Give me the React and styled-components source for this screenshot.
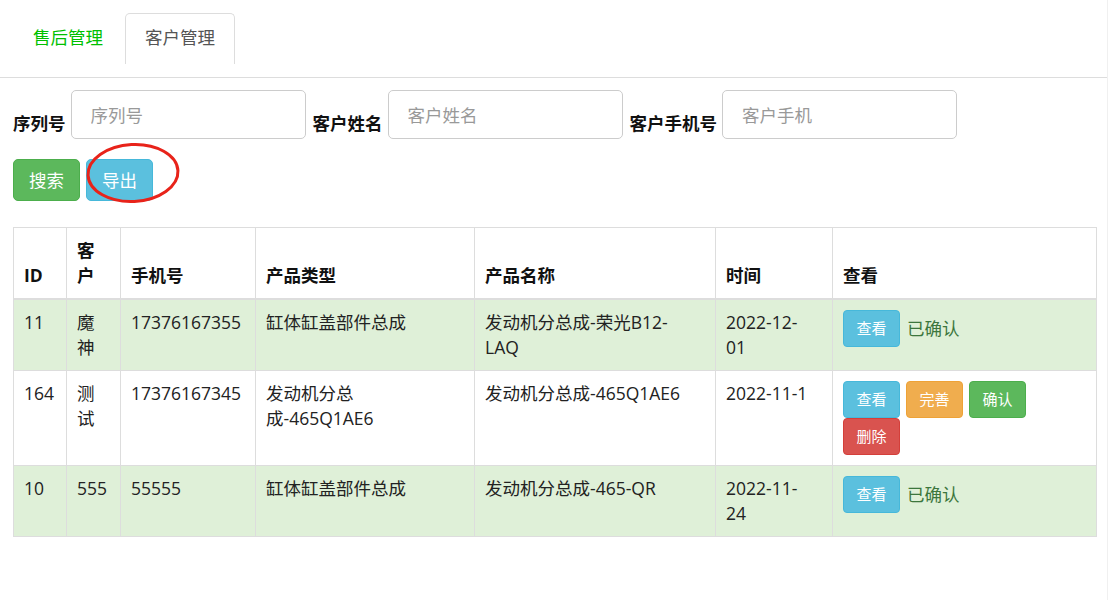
import React from 'react';
import styled, { createGlobalStyle } from 'styled-components';

const GlobalStyle = createGlobalStyle`
  body {
    margin: 0;
    background: #fff;
    font-family: "Microsoft YaHei", "Open Sans", "Noto Sans CJK SC", sans-serif;
    font-size: 17.5px;
    line-height: 25px;
    color: #333;
  }
  * { box-sizing: border-box; }
`;

const Page = styled.div`
  width: 1108px;
  min-height: 600px;
  border-right: 1px solid #f0f0f0;
`;

const Tabs = styled.ul`
  display: flex;
  margin: 0;
  padding: 13px 0 0 13px;
  height: 78px;
  list-style: none;
  border-bottom: 1px solid #ddd;
  align-items: flex-start;
`;

const Tab = styled.li`
  height: 51px;
  padding: 11px 19px 0;
  margin-right: 2px;
  border: 1px solid ${p => (p.$active ? '#ddd' : 'transparent')};
  border-bottom: none;
  border-radius: 5px 5px 0 0;
  color: ${p => (p.$active ? '#555' : '#00c000')};
  cursor: pointer;
`;

const SearchForm = styled.div`
  padding: 12px 13px 0;
`;

const FieldRow = styled.div`
  display: flex;
  align-items: flex-end;
`;

const Label = styled.label`
  font-weight: bold;
  color: #111;
  margin: 0 5px 3px 0;
  white-space: nowrap;
`;

const Input = styled.input`
  width: 235px;
  height: 49px;
  margin-right: 7px;
  padding: 0 19px;
  border: 1px solid #ccc;
  border-radius: 5px;
  font-family: inherit;
  font-size: 17.5px;
  color: #555;
  outline: none;
  &::placeholder { color: #999; }
`;

const ButtonRow = styled.div`
  position: relative;
  display: flex;
  gap: 6px;
  margin-top: 20px;
`;

const palette = {
  success: ['#5cb85c', '#4cae4c'],
  info: ['#5bc0de', '#46b8da'],
  warning: ['#f0ad4e', '#eea236'],
  danger: ['#d9534f', '#d43f3a'],
};

const Button = styled.button`
  height: 42px;
  padding: 0 15px;
  border: 1px solid ${p => palette[p.$kind][1]};
  border-radius: 5px;
  background: ${p => palette[p.$kind][0]};
  color: #fff;
  font-family: inherit;
  font-size: 17.5px;
  line-height: 25px;
  cursor: pointer;
`;

const SmallButton = styled(Button)`
  height: 37px;
  padding: 0 12.5px;
  font-size: 15px;
  line-height: 23px;
  border-radius: 4px;
`;

const Circle = styled.svg`
  position: absolute;
  left: 72px;
  top: -17px;
  pointer-events: none;
`;

const Table = styled.table`
  margin: 26px 0 0 13px;
  width: 1083px;
  border-collapse: collapse;
  table-layout: fixed;
  border: 1px solid #ddd;
`;

const Th = styled.th`
  padding: 10px;
  text-align: left;
  vertical-align: bottom;
  font-weight: bold;
  color: #111;
  border: 1px solid #ddd;
  border-bottom: 2.5px solid #ddd;
`;

const Row = styled.tr`
  background: ${p => (p.$success ? '#dff0d8' : '#fff')};
`;

const Td = styled.td`
  padding: 10px;
  vertical-align: top;
  color: #222;
  white-space: pre-line;
  border: 1px solid #ddd;
`;

const Actions = styled.div`
  display: flex;
  flex-wrap: wrap;
  align-items: center;
  column-gap: 6px;
  max-width: 200px;
`;

const Confirmed = styled.span`
  color: #3c763d;
  margin-left: 1px;
`;

const columns = [
  ['ID', 53],
  ['客户', 54],
  ['手机号', 135],
  ['产品类型', 219],
  ['产品名称', 241],
  ['时间', 117],
  ['查看', 264],
];

const rows = [
  {
    id: '11', name: '魔神', phone: '17376167355', type: '缸体缸盖部件总成',
    product: '发动机分总成-荣光B12-\nLAQ', time: '2022-12-\n01', confirmed: true,
  },
  {
    id: '164', name: '测试', phone: '17376167345', type: '发动机分总\n成-465Q1AE6',
    product: '发动机分总成-465Q1AE6', time: '2022-11-1', confirmed: false,
  },
  {
    id: '10', name: '555', phone: '55555', type: '缸体缸盖部件总成',
    product: '发动机分总成-465-QR', time: '2022-11-\n24', confirmed: true,
  },
];

export default function App() {
  return (
    <Page>
      <GlobalStyle />
      <Tabs>
        <Tab>售后管理</Tab>
        <Tab $active>客户管理</Tab>
      </Tabs>

      <SearchForm>
        <FieldRow>
          <Label>序列号</Label>
          <Input placeholder="序列号" />
          <Label>客户姓名</Label>
          <Input placeholder="客户姓名" />
          <Label>客户手机号</Label>
          <Input placeholder="客户手机" />
        </FieldRow>
        <ButtonRow>
          <Button $kind="success">搜索</Button>
          <Button $kind="info">导出</Button>
          <Circle width="96" height="62" viewBox="0 0 96 62">
            <ellipse cx="48" cy="31" rx="45" ry="28.5" fill="none" stroke="#e8231a" strokeWidth="3" transform="rotate(-3 48 31)" />
          </Circle>
        </ButtonRow>
      </SearchForm>

      <Table>
        <colgroup>
          {columns.map(([k, w]) => <col key={k} style={{ width: w }} />)}
        </colgroup>
        <thead>
          <tr>
            {columns.map(([k]) => <Th key={k}>{k}</Th>)}
          </tr>
        </thead>
        <tbody>
          {rows.map(r => (
            <Row key={r.id} $success={r.confirmed}>
              <Td>{r.id}</Td>
              <Td>{r.name}</Td>
              <Td>{r.phone}</Td>
              <Td>{r.type}</Td>
              <Td>{r.product}</Td>
              <Td>{r.time}</Td>
              <Td>
                <Actions>
                  <SmallButton $kind="info">查看</SmallButton>
                  {r.confirmed ? (
                    <Confirmed>已确认</Confirmed>
                  ) : (
                    <>
                      <SmallButton $kind="warning">完善</SmallButton>
                      <SmallButton $kind="success">确认</SmallButton>
                      <SmallButton $kind="danger">删除</SmallButton>
                    </>
                  )}
                </Actions>
              </Td>
            </Row>
          ))}
        </tbody>
      </Table>
    </Page>
  );
}
